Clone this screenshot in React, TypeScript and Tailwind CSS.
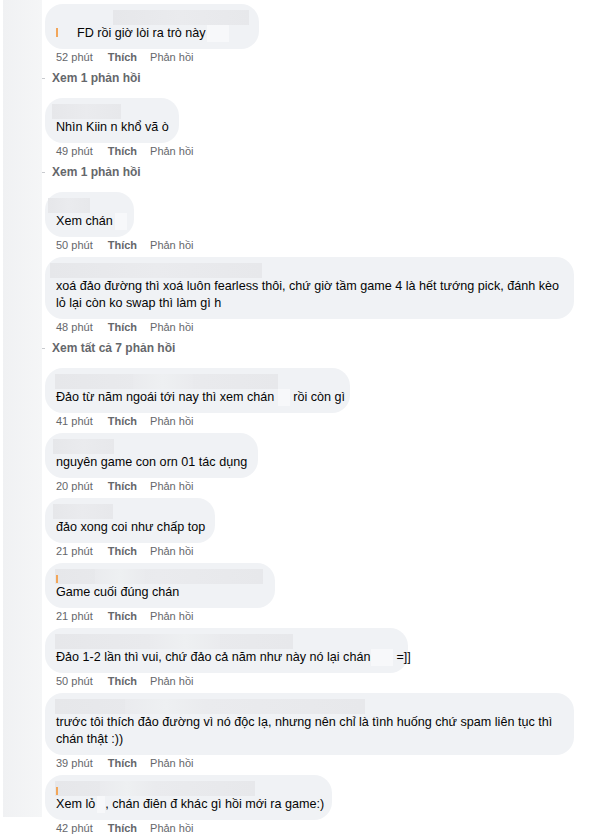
import React from "react";

type NameRect = { l: number; w: number; blob?: [number, number] };
type C = {
  w: number;
  name: NameRect;
  lines: React.ReactNode[];
  time: string;
  more?: string;
  orangeName?: boolean;
};

const Gap = ({ w, ml = 0 }: { w: number; ml?: number }) => (
  <span
    className="inline-block h-[17px] bg-[#f7f8fa] align-middle"
    style={{ width: w, marginLeft: ml }}
  />
);

const comments: C[] = [
  {
    w: 214,
    name: { l: 68, w: 136 },
    lines: [
      <>
        <span className="inline-block w-[2px] h-[9px] bg-[#f2a65a] align-middle mr-[19px] -mt-[2px]" />
        FD rồi giờ lòi ra trò này
        <Gap w={22} ml={1} />
      </>,
    ],
    time: "52 phút",
    more: "Xem 1 phản hồi",
  },
  {
    w: 134,
    name: { l: 7, w: 69 },
    lines: ["Nhìn Kiin n khổ vã ò"],
    time: "49 phút",
    more: "Xem 1 phản hồi",
  },
  {
    w: 89,
    name: { l: 3, w: 42 },
    lines: [
      <>
        Xem chán
        <Gap w={12} ml={2} />
      </>,
    ],
    time: "50 phút",
  },
  {
    w: 529,
    name: { l: 5, w: 212 },
    lines: [
      "xoá đảo đường thì xoá luôn fearless thôi, chứ giờ tầm game 4 là hết tướng pick, đánh kèo",
      "lỏ lại còn ko swap thì làm gì h",
    ],
    time: "48 phút",
    more: "Xem tất cả 7 phản hồi",
  },
  {
    w: 305,
    name: { l: 10, w: 223, blob: [78, 60] },
    lines: [
      <>
        Đảo từ năm ngoái tới nay thì xem chán
        <Gap w={12} ml={4} />
        <span className="ml-[3px]">rồi còn gì</span>
      </>,
    ],
    time: "41 phút",
  },
  {
    w: 213,
    name: { l: 8, w: 61 },
    lines: ["nguyên game con orn 01 tác dụng"],
    time: "20 phút",
  },
  {
    w: 170,
    name: { l: 8, w: 60 },
    lines: ["đảo xong coi như chấp top"],
    time: "21 phút",
  },
  {
    w: 230,
    name: { l: 10, w: 208, blob: [40, 50] },
    lines: ["Game cuối đúng chán"],
    time: "21 phút",
    orangeName: true,
  },
  {
    w: 363,
    name: { l: 10, w: 238, blob: [95, 70] },
    lines: [
      <>
        Đảo 1-2 lần thì vui, chứ đảo cả năm như này nó lại chán
        <Gap w={22} ml={1} />
        <span className="ml-[3px]">=]]</span>
      </>,
    ],
    time: "50 phút",
  },
  {
    w: 529,
    name: { l: 10, w: 310, blob: [70, 80] },
    lines: [
      "trước tôi thích đảo đường vì nó độc lạ, nhưng nên chỉ là tình huống chứ spam liên tục thì",
      "chán thật :))",
    ],
    time: "39 phút",
  },
  {
    w: 287,
    name: { l: 10, w: 200, blob: [45, 55] },
    lines: [
      <>
        Xem lỏ
        <Gap w={8} ml={2} />
        , chán điên đ khác gì hồi mới ra game:)
      </>,
    ],
    time: "42 phút",
    orangeName: true,
  },
];

function Comment({ c }: { c: C }) {
  return (
    <div className="flex flex-col">
      <div
        className="ml-[3px] rounded-[18px] bg-[#f0f2f5] pl-[11px] pr-3 pt-[6px] pb-[7px]"
        style={{ width: c.w }}
      >
        <div className="relative h-[15px]">
          <div
            className="absolute top-0 h-[15px] bg-gradient-to-r from-[#e6e7ea] via-[#eaebee] to-[#e7e8eb]"
            style={{ left: c.name.l - 11, width: c.name.w }}
          />
          {c.name.blob && (
            <div
              className="absolute top-0 h-[15px] bg-gradient-to-r from-[#eaebee] via-[#eef0f2] to-[#eaebee]"
              style={{ left: c.name.l - 11 + c.name.blob[0], width: c.name.blob[1] }}
            />
          )}
          {c.orangeName && (
            <div className="absolute left-0 top-[6px] h-[8px] w-[2px] bg-[#f2a65a]" />
          )}
        </div>
        {c.lines.map((l, i) => (
          <div
            key={i}
            className="h-[17px] whitespace-nowrap text-[12.6px] leading-[17px] text-[#050505]"
          >
            {l}
          </div>
        ))}
      </div>
      <div className="ml-[14px] flex h-[16px] items-center text-[11px] leading-[16px] text-[#65676b]">
        <span>{c.time}</span>
        <span className="ml-[15px] font-bold">Thích</span>
        <span className="ml-[13px]">Phản hồi</span>
      </div>
      {c.more ? (
        <div className="flex h-[33px] items-start pt-[4px]">
          <div className="flex h-[18px] items-center">
            <div className="h-px w-[3px] bg-[#c9cbcf]" />
            <span className="ml-[7px] text-[12px] font-bold leading-[18px] text-[#65676b]">
              {c.more}
            </span>
          </div>
        </div>
      ) : (
        <div className="h-[4px]" />
      )}
    </div>
  );
}

export default function App() {
  return (
    <div
      className="flex min-h-[835px] w-[610px] bg-white"
      style={{ fontFamily: '"Liberation Sans", Arial, sans-serif' }}
    >
      <div className="ml-[3px] h-[817px] w-[39px] shrink-0 bg-gradient-to-r from-[#f0f1f3] to-[#f5f6f7]" />
      <div className="flex flex-col pt-[4px]">
        {comments.map((c, i) => (
          <Comment key={i} c={c} />
        ))}
      </div>
    </div>
  );
}
